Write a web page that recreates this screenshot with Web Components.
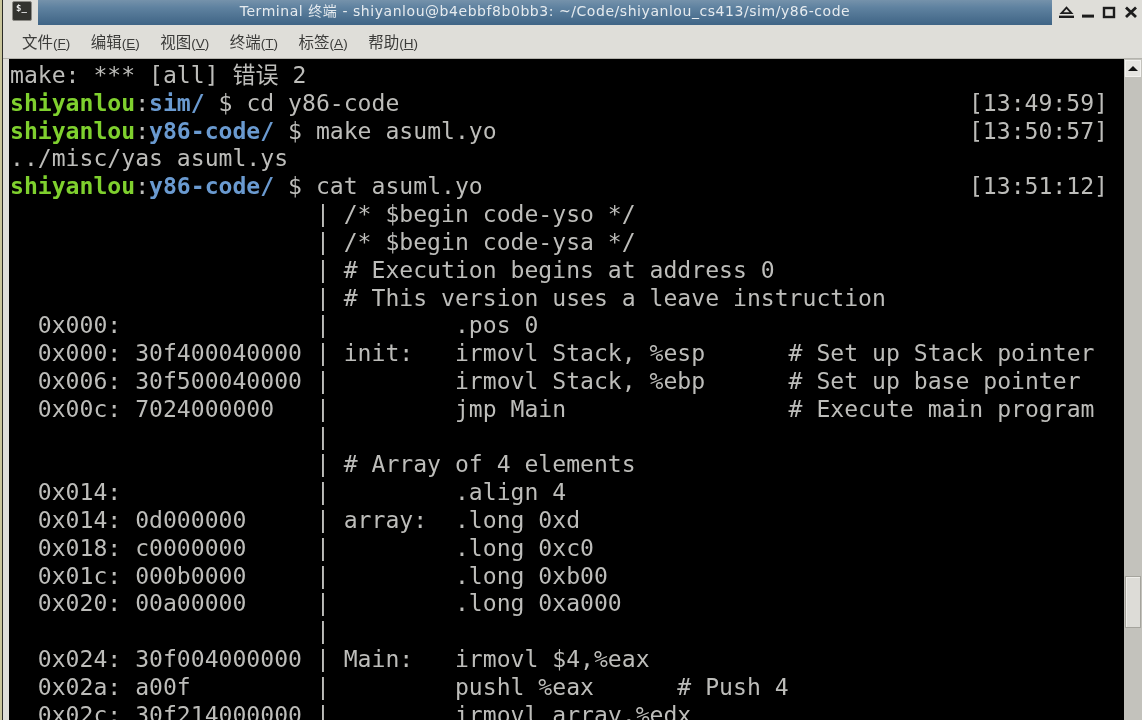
<!DOCTYPE html>
<html>
<head>
<meta charset="utf-8">
<title>Terminal</title>
<style>
  html, body { margin: 0; height: 720px; overflow: hidden; background: #dfded9; }
</style>
</head>
<body>
<term-window>
  <term-line>make: *** [all] 错误 2</term-line>
  <term-line prompt="sim/" cmd="cd y86-code" time="13:49:59"></term-line>
  <term-line prompt="y86-code/" cmd="make asuml.yo" time="13:50:57"></term-line>
  <term-line>../misc/yas asuml.ys</term-line>
  <term-line prompt="y86-code/" cmd="cat asuml.yo" time="13:51:12"></term-line>
  <term-line>                      | /* $begin code-yso */</term-line>
  <term-line>                      | /* $begin code-ysa */</term-line>
  <term-line>                      | # Execution begins at address 0</term-line>
  <term-line>                      | # This version uses a leave instruction</term-line>
  <term-line>  0x000:              |         .pos 0</term-line>
  <term-line>  0x000: 30f400040000 | init:   irmovl Stack, %esp      # Set up Stack pointer</term-line>
  <term-line>  0x006: 30f500040000 |         irmovl Stack, %ebp      # Set up base pointer</term-line>
  <term-line>  0x00c: 7024000000   |         jmp Main                # Execute main program</term-line>
  <term-line>                      |</term-line>
  <term-line>                      | # Array of 4 elements</term-line>
  <term-line>  0x014:              |         .align 4</term-line>
  <term-line>  0x014: 0d000000     | array:  .long 0xd</term-line>
  <term-line>  0x018: c0000000     |         .long 0xc0</term-line>
  <term-line>  0x01c: 000b0000     |         .long 0xb00</term-line>
  <term-line>  0x020: 00a00000     |         .long 0xa000</term-line>
  <term-line>                      |</term-line>
  <term-line>  0x024: 30f004000000 | Main:   irmovl $4,%eax</term-line>
  <term-line>  0x02a: a00f         |         pushl %eax      # Push 4</term-line>
  <term-line>  0x02c: 30f214000000 |         irmovl array,%edx</term-line>
</term-window>

<script>
const MONO = '"DejaVu Sans Mono", "Noto Sans CJK SC", monospace';

class TermLine extends HTMLElement {
  constructor() {
    super();
    this.attachShadow({ mode: 'open' });
  }
  connectedCallback() {
    const prompt = this.getAttribute('prompt');
    const cmd = this.getAttribute('cmd') || '';
    const time = this.getAttribute('time');
    const body = prompt
      ? `<span><b class="u">shiyanlou</b><span class="c">:</span><b class="p">${prompt}</b> $ ${cmd}</span><span>[${time}]</span>`
      : `<slot></slot>`;
    this.shadowRoot.innerHTML = `
      <style>
        :host { display: flex; justify-content: space-between; height: 27.82px;
                white-space: pre; font: 23.1px/27.82px ${MONO}; color: #bdbdba; }
        b { font-weight: bold; }
        .u { color: #7fd02e; }
        .p { color: #6a9ad0; }
      </style>
      ${body}`;
  }
}

class TermButtons extends HTMLElement {
  constructor() {
    super();
    this.attachShadow({ mode: 'open' });
    this.shadowRoot.innerHTML = `
      <style>
        :host { display: block; width: 90px; height: 25px; background: #dfded9; }
        svg { display: block; }
      </style>
      <svg width="90" height="25" viewBox="0 0 90 25" fill="#1c1c1c">
        <path d="M9.5 13.2 L14.5 7.6 L19.5 13.2 Z" fill="none" stroke="#1c1c1c" stroke-width="1.8"/>
        <rect x="7" y="15.6" width="15" height="2.4"/>
        <rect x="30" y="14.6" width="12" height="3"/>
        <rect x="52" y="8" width="10" height="9" fill="none" stroke="#1c1c1c" stroke-width="2.4"/>
        <path d="M74 7.5 L84 17 M84 7.5 L74 17" stroke="#1c1c1c" stroke-width="2.8" fill="none"/>
      </svg>`;
  }
}

class TermScrollbar extends HTMLElement {
  constructor() {
    super();
    this.attachShadow({ mode: 'open' });
    this.shadowRoot.innerHTML = `
      <style>
        :host { display: flex; flex-direction: column; width: 18px; flex: none; background: #c3c2bc;
                box-sizing: border-box; padding: 1px 1px 0 1px; }
        .arrow { height: 17px; background: #e6e5e1; border: 1px solid #f2f1ee; box-sizing: border-box;
                 display: flex; align-items: center; justify-content: center; }
        .arrow i { width: 0; height: 0; border-left: 5px solid transparent; border-right: 5px solid transparent; border-bottom: 5px solid #111; }
        .space { height: 499px; }
        .thumb { height: 52px; background: #dddcd7; border: 1px solid #a5a49d; box-shadow: inset 1px 1px 0 #efeeea; box-sizing: border-box; }
      </style>
      <div class="arrow"><i></i></div>
      <div class="space"></div>
      <div class="thumb"></div>`;
  }
}

class TermWindow extends HTMLElement {
  constructor() {
    super();
    this.attachShadow({ mode: 'open' });
    const menus = [['文件','F'],['编辑','E'],['视图','V'],['终端','T'],['标签','A'],['帮助','H']];
    this.shadowRoot.innerHTML = `
      <style>
        :host { display: flex; height: 720px; overflow: hidden; filter: blur(0.6px);
                font-family: "Liberation Sans", "Noto Sans CJK SC", sans-serif; }
        .edge { width: 3px; flex: none; background: linear-gradient(90deg, #c9c59b 66%, #2a2a26 66%); }
        .win { flex: 1; min-width: 0; display: flex; flex-direction: column; }
        .title { display: flex; height: 25px; flex: none; background: linear-gradient(#7592ab, #5f82a0 30%, #3f6485); }
        .icon { width: 35px; flex: none; display: flex; justify-content: center; align-items: center; background: #dfded9; padding: 0 0 3px 3px; box-sizing: border-box; }
        .icon span { width: 20px; height: 20px; background: #33332f; border: 1px solid #8b8a85; border-radius: 2px; box-sizing: border-box;
                     font: bold 9px/13px "DejaVu Sans Mono", monospace; color: #eee; padding-left: 3px; }
        .caption { flex: 1; text-align: center; color: #e6ebef; font: 14px/23px "DejaVu Sans", "Noto Sans CJK SC", sans-serif; letter-spacing: 0.55px; white-space: nowrap; }
        .menu { display: flex; height: 34px; flex: none; gap: 20.5px; align-items: center; padding: 0 0 2px 19px; box-sizing: border-box;
                background: #dfded9; border-bottom: 1px solid #b4b3ad; font-size: 15.5px; color: #3c3c3a; }
        .menu small { font-size: 13.5px; }
        .main { display: flex; flex: 1; min-height: 0; }
        .pad { width: 6px; flex: none; background: #dfded9; }
        .term { flex: 1; min-width: 0; background: #000; padding: 3px 16px 0 1px; overflow: hidden; }
      </style>
      <div class="edge"></div>
      <div class="win">
        <div class="title">
          <div class="icon"><span>$_</span></div>
          <div class="caption">Terminal 终端 - shiyanlou@b4ebbf8b0bb3: ~/Code/shiyanlou_cs413/sim/y86-code</div>
          <term-buttons></term-buttons>
        </div>
        <div class="menu">
          ${menus.map(([n, k]) => `<span>${n}<small>(<u>${k}</u>)</small></span>`).join('')}
        </div>
        <div class="main">
          <div class="pad"></div>
          <div class="term"><slot></slot></div>
          <term-scrollbar></term-scrollbar>
        </div>
      </div>`;
  }
}

customElements.define('term-line', TermLine);
customElements.define('term-buttons', TermButtons);
customElements.define('term-scrollbar', TermScrollbar);
customElements.define('term-window', TermWindow);
</script>
</body>
</html>
